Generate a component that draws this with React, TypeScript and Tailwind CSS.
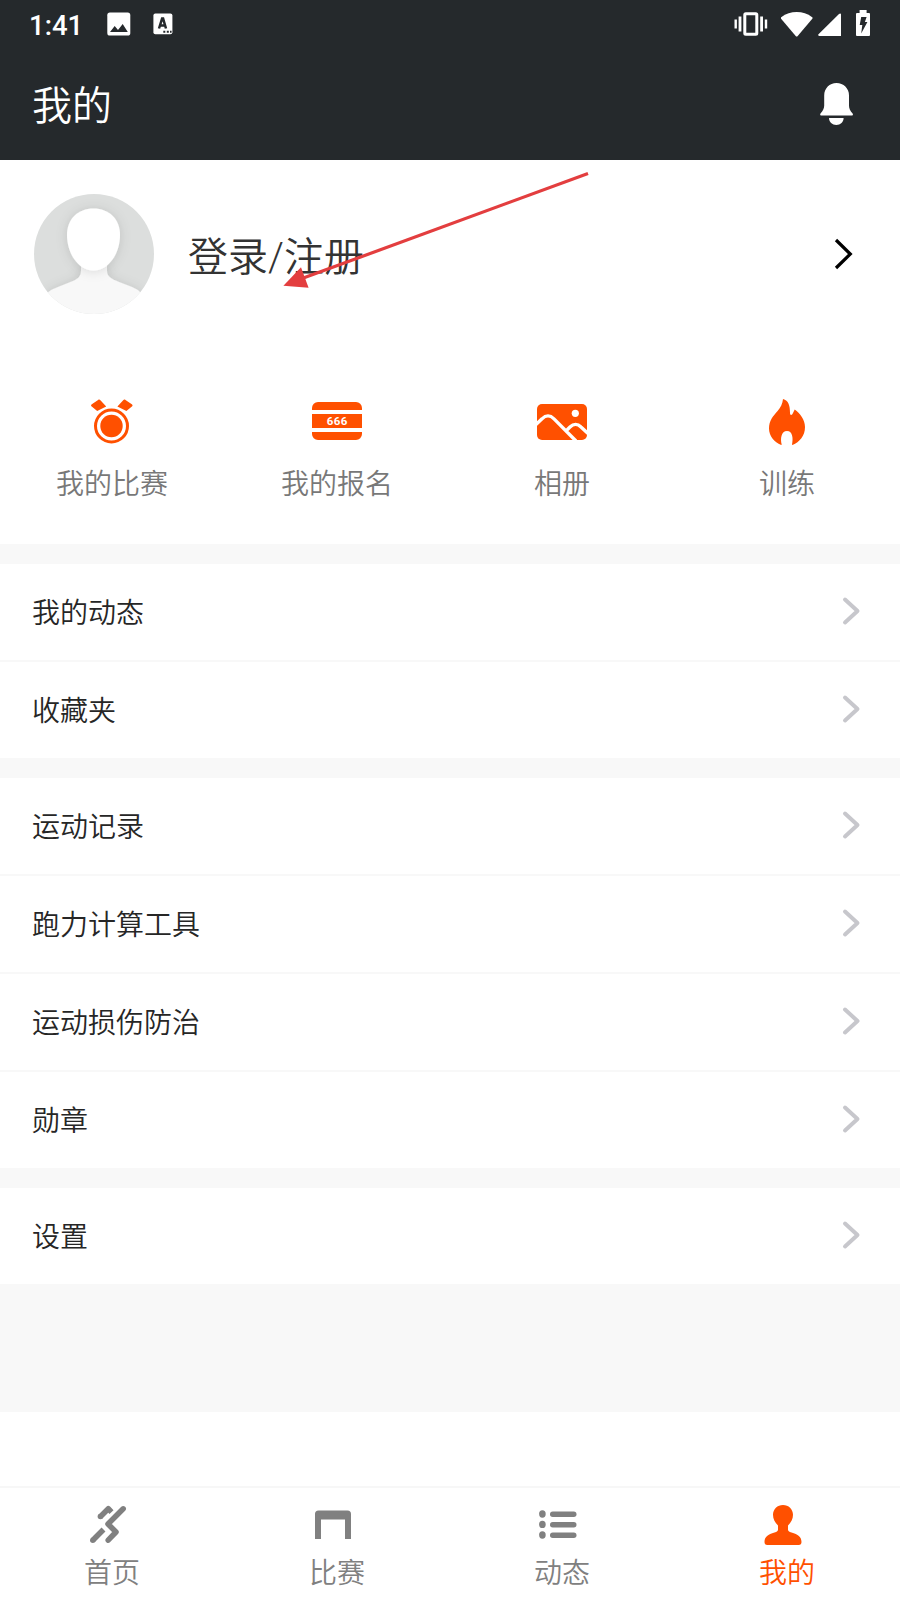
import type { ReactNode } from 'react';

const groups = [
  ['我的动态', '收藏夹'],
  ['运动记录', '跑力计算工具', '运动损伤防治', '勋章'],
  ['设置'],
];

function StatusBar() {
  return (
    <div className="h-12 flex items-center text-white fill-white">
      <span className="ml-[29px] mt-[3px] w-[53px] font-['Roboto'] font-medium text-[27.5px] leading-none">1:41</span>
      <svg className="ml-[25px]" width="24" height="24" viewBox="0 0 24 24">
        <rect x="0.3" y="0.6" width="23" height="23" rx="2.6" />
        <path className="fill-[#25292c]" d="M3 20l4.7-6 3.3 4 4.7-6.1 5.1 8.1z" />
      </svg>
      <svg className="ml-[22px]" width="20" height="22" viewBox="0 0 20 22">
        <rect x="0.4" y="0.6" width="19" height="20.6" rx="2" />
        <path
          className="fill-none stroke-[#25292c]"
          strokeWidth="2.5"
          d="M6 15.5L9.1 5.6h1L13 15.5M7 12.5h5.5"
        />
        <path className="fill-[#25292c]" d="M10.3 17.8h2v2h-2zM13.8 17.8h2v2h-2zM17 17.8h1.6v2H17z" />
      </svg>
      <svg className="ml-auto" width="34" height="24" viewBox="0 0 34 24">
        <path d="M0.5 7.5h2.4v9H0.5zM4.6 4.5h2.8v15H4.6zM26.2 4.5H29v15h-2.8zM30.8 7.5h2.4v9h-2.4z" />
        <rect x="10.8" y="1.8" width="12" height="20.4" rx="1" className="fill-none stroke-white" strokeWidth="3" />
      </svg>
      <svg className="ml-[13px]" width="32" height="25" viewBox="0 0 32 25">
        <path d="M0.2 5.2C5 1.5 10 0 15.7 0s10.8 1.5 15.5 5.2c.5.4.5 1 .1 1.5L16.7 24c-.6.7-1.4.7-2 0L.1 6.7c-.4-.5-.4-1.1.1-1.5z" />
      </svg>
      <svg className="ml-[5px] mt-0.5" width="24" height="24" viewBox="0 0 24 24">
        <path d="M23 1.3V23H1.3c-1.2 0-1.6-1-.8-1.8L21 1c.9-.9 2-.7 2 .3z" />
      </svg>
      <svg className="ml-3.5 mr-[30px] mb-[3px]" width="14" height="26" viewBox="0 0 14 26">
        <path d="M3.6 0h7v3H13a1 1 0 011 1v21a1 1 0 01-1 1H1a1 1 0 01-1-1V4a1 1 0 011-1h2.6z" />
        <path className="fill-[#25292c]" d="M5.2 7h5.4l-1.7 5h2.5L5.2 23.4 6.3 15H3.7z" />
      </svg>
    </div>
  );
}

function Header() {
  return (
    <header className="h-40 bg-[#25292c]">
      <StatusBar />
      <div className="h-28 pl-8 pr-[46px] flex items-center justify-between">
        <h1 className="mb-0.5 text-[40px] leading-none text-white">我的</h1>
        <svg width="34" height="43" viewBox="0 0 34 43" className="fill-white">
          <path d="M16.5 0C23.5 0 29 5.4 29 12.4v10.2c0 2.8 1 5 3.6 8 .7.9.2 2-.8 2H1.4c-1.1 0-1.6-1.1-.9-2 2.5-3 3.7-5.2 3.7-8V12.4C4.2 5.4 9.5 0 16.5 0z" />
          <path d="M9 35h14.6c0 4-3.2 7-7.3 7S9 39 9 35z" />
        </svg>
      </div>
    </header>
  );
}

function Avatar() {
  return (
    <svg width="120" height="120" viewBox="0 0 120 120">
      <defs>
        <clipPath id="round">
          <circle cx="60" cy="60" r="60" />
        </clipPath>
        <filter id="soft" x="-30%" y="-30%" width="160%" height="160%">
          <feDropShadow dx="0" dy="1" stdDeviation="6" floodOpacity="0.12" />
        </filter>
      </defs>
      <g clipPath="url(#round)">
        <rect width="120" height="120" fill="#dcdedd" />
        <path
          d="M47 70v7c0 5-3 8-8 10l-15 6c-8 3-12 6-15 12v25h102v-25c-3-6-6-9-13-12l-13-5c-8-3-12-6-12-11v-7z"
          fill="#f8f8f8"
          filter="url(#soft)"
        />
        <path
          d="M59.5 14.5C75 14.5 86 25 86 41c0 18-11 35.5-26.5 35.5S33 59 33 41c0-16 11-26.5 26.5-26.5z"
          fill="#fff"
          filter="url(#soft)"
        />
      </g>
    </svg>
  );
}

function Shortcut({ label, children }: { label: string; children: ReactNode }) {
  return (
    <div className="flex flex-col items-center">
      <svg width="50" height="50" viewBox="0 0 50 50" className="fill-[#ff5000] mr-px">
        {children}
      </svg>
      <span className="mt-4 mr-px h-10 text-[28px] leading-10 text-[#787878]">{label}</span>
    </div>
  );
}

function Profile() {
  return (
    <section className="relative h-96 bg-white">
      <div className="pt-[34px] pl-[34px] pr-[46px] flex items-center">
        <Avatar />
        <span className="ml-[34px] mt-[3px] text-[40px] leading-none text-[#333]">
          登录<span className="font-['Roboto']">/</span>注册
        </span>
        <svg className="ml-auto" width="20" height="32" viewBox="0 0 20 32">
          <path d="M2 2l14.3 14L2 30" fill="none" stroke="#000" strokeWidth="3.2" />
        </svg>
      </div>
      <div className="mt-[82px] grid grid-cols-4">
        <Shortcut label="我的比赛">
          <path d="M4.8 8.2l6.3-4.3c.8-.5 1.7-.4 2.3.3l5.8 6.3-9 4.6-5.8-4.9c-.6-.7-.4-1.5.4-2zM44.8 8.2l-6.3-4.3c-.8-.5-1.7-.4-2.3.3l-5.8 6.3 9 4.6 5.8-4.9c.6-.7.4-1.5-.4-2z" />
          <circle cx="24.5" cy="30" r="16" fill="none" stroke="#ff5000" strokeWidth="3" />
          <circle cx="24.5" cy="30" r="11.2" />
        </Shortcut>
        <Shortcut label="我的报名">
          <path d="M6 6h38a6 6 0 016 6v2H0v-2a6 6 0 016-6zM0 18h50v14H0zM0 36h50v2a6 6 0 01-6 6H6a6 6 0 01-6-6z" />
          <text
            x="25.2"
            y="29"
            textAnchor="middle"
            className="fill-white font-['Roboto'] font-bold text-[11.5px] tracking-[0.4px]"
          >
            666
          </text>
        </Shortcut>
        <Shortcut label="相册">
          <rect y="8" width="50" height="36" rx="5" />
          <circle cx="38.3" cy="17.3" r="3.6" fill="#fff" />
          <path
            d="M-1 28.5l6-5.7c4-4 8-4 12 0L39 45M29.5 34.5L33 31c3.6-3.6 7.6-3.6 11 0l7 6.5"
            fill="none"
            stroke="#fff"
            strokeWidth="3.3"
          />
        </Shortcut>
        <Shortcut label="训练">
          <path d="M21 3c5.5 1.5 7 6.5 7 14 0 2.6 2 2.6 3 0l1.7-3.5C38 17.5 43 23.5 43 31c0 9-5.5 15-12.5 18l-.5-.5c1.3-5.5.8-13.5-5-13.5s-6.8 8-5.3 13.5l-.5.5C12.2 46 7 40 7 32.5c0-8 4.3-12.6 8.6-17.5 3-3.4 5-7.5 5.4-12z" />
        </Shortcut>
      </div>
      {/* pointer towards the login entry */}
      <svg className="absolute left-[280px] top-2.5" width="312" height="120" viewBox="0 0 312 120">
        <path d="M308 3.5L24 107.8" stroke="#e33e3f" strokeWidth="3.2" />
        <path d="M3.4 115.7L21 97.3l7.6 20.5z" fill="#e33e3f" />
      </svg>
    </section>
  );
}

function Row({ label }: { label: string }) {
  return (
    <li className="h-24 pl-8 pr-[39px] flex items-center justify-between bg-white">
      <span className="mb-0.5 text-[28px] leading-none text-[#262626]">{label}</span>
      <svg width="20" height="30" viewBox="0 0 20 30" className="mb-0.5">
        <path
          d="M4 3.5L16.5 15 4 26.5"
          fill="none"
          stroke="#c7c7cc"
          strokeWidth="4"
          strokeLinecap="round"
          strokeLinejoin="round"
        />
      </svg>
    </li>
  );
}

function Tab({ label, active, children }: { label: string; active?: boolean; children: ReactNode }) {
  return (
    <div className={`flex flex-col items-center ${active ? 'text-[#ff5000]' : 'text-[#808080]'}`}>
      <svg width="40" height="40" viewBox="0 0 40 40" fill="currentColor" className="mr-[9px]">
        {children}
      </svg>
      <span className="mt-1.5 mr-px text-[28px] leading-10">{label}</span>
    </div>
  );
}

function TabBar() {
  return (
    <nav className="h-[114px] pt-[17px] grid grid-cols-4 bg-white border-t-2 border-[#f7f7f7]">
      <Tab label="首页">
        <g fill="none" stroke="currentColor" strokeWidth="5.5" strokeLinejoin="round">
          <path d="M12.3 11.7l8-8 3.2 3.5" />
          <path d="M35.2 3.8L20 19l8 8-7.8 8.2" strokeLinecap="round" />
          <path d="M4.8 35.2L15.5 24.5" />
        </g>
        <circle cx="12.4" cy="11.6" r="2.75" />
        <circle cx="4.8" cy="35.2" r="2.75" />
      </Tab>
      <Tab label="比赛">
        <path d="M2 33.5V9a3.5 3.5 0 013.5-3.5h29A3.5 3.5 0 0138 9v24.5a.5.5 0 01-.5.5h-5a.5.5 0 01-.5-.5v-19H8v19a.5.5 0 01-.5.5h-5a.5.5 0 01-.5-.5z" />
      </Tab>
      <Tab label="动态">
        <ellipse cx="4.4" cy="9" rx="3.3" ry="3.7" />
        <ellipse cx="4.4" cy="19.4" rx="3.3" ry="3.7" />
        <ellipse cx="4.4" cy="30" rx="3.3" ry="3.7" />
        <rect x="12" y="6.5" width="26.5" height="5.5" rx="2.7" />
        <rect x="12" y="17" width="26.5" height="5.5" rx="2.7" />
        <rect x="12" y="27.5" width="26.5" height="5.5" rx="2.7" />
      </Tab>
      <Tab label="我的" active>
        <path d="M20 0c5.600 0 10 4.200 10 9.800 0 4.200-1.800 7.600-5 10.700v4c0 1.500 1 2.300 3.500 3 6.500 1.800 10 4.300 10 9.500 0 2-1 3-2.700 3H4.200c-1.700 0-2.700-1-2.700-3 0-5.200 3.500-7.700 10-9.500 2.500-.7 3.500-1.500 3.500-3v-4c-3.200-3.100-5-6.500-5-10.700C10 4.200 14.400 0 20 0z" />
      </Tab>
    </nav>
  );
}

export default function App() {
  return (
    <div className="w-[900px] h-[1600px] overflow-hidden flex flex-col bg-white font-['Noto_Sans_CJK_SC',sans-serif] font-[350]">
      <Header />
      <Profile />
      <main className="h-[868px] shrink-0 pt-5 flex flex-col gap-5 bg-[#f8f8f8]">
        {groups.map((items) => (
          <ul key={items[0]} className="flex flex-col gap-0.5">
            {items.map((label) => (
              <Row key={label} label={label} />
            ))}
          </ul>
        ))}
      </main>
      <div className="grow" />
      <TabBar />
    </div>
  );
}
